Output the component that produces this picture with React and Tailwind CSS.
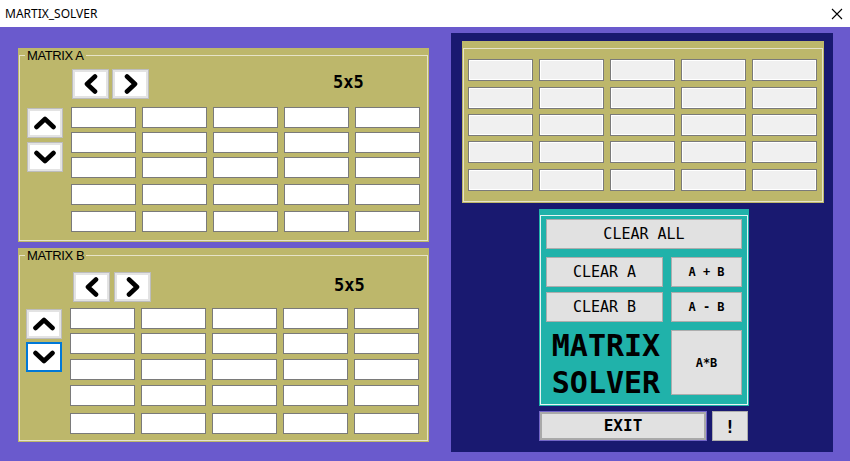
import { useState } from "react";

const mono = { fontFamily: '"DejaVu Sans Mono", "Liberation Mono", monospace' };
const sans = { fontFamily: '"Liberation Sans", Arial, sans-serif' };

const gapCls = {
  0: "",
  4: "mt-[4px]",
  5: "mt-[5px]",
  6: "mt-[6px]",
  7: "mt-[7px]",
};

function Chevron({ dir }) {
  const pts = {
    left: "12,2.5 4,10 12,17.5",
    right: "4,2.5 12,10 4,17.5",
    up: "2.5,11 11,3 19.5,11",
    down: "2.5,3 11,11 19.5,3",
  };
  const horiz = dir === "left" || dir === "right";
  return (
    <svg
      width={horiz ? 16 : 22}
      height={horiz ? 20 : 14}
      viewBox={horiz ? "0 0 16 20" : "0 0 22 14"}
      fill="none"
    >
      <polyline
        points={pts[dir]}
        stroke="#000"
        strokeWidth="4.6"
        strokeLinecap="round"
        strokeLinejoin="round"
      />
    </svg>
  );
}

function NavButton({ dir, focused, className = "" }) {
  const horiz = dir === "left" || dir === "right";
  return (
    <button
      className={`flex items-center justify-center bg-white ${
        horiz ? "w-[37px]" : "w-[36px]"
      } h-[30px] ${
        focused
          ? "border-2 border-[#0078d7]"
          : "border border-[#bdbdbd] shadow-[inset_0_0_0_2px_#e3e3e3]"
      } ${className}`}
    >
      <Chevron dir={dir} />
    </button>
  );
}

function Cells({ gaps, white = true }) {
  return (
    <div className="flex flex-col">
      {gaps.map((g, r) => (
        <div key={r} className={`flex gap-[6px] ${gapCls[g]}`}>
          {[0, 1, 2, 3, 4].map((c) =>
            white ? (
              <input
                key={c}
                className="w-[65px] h-[21px] bg-white border border-[#7a7a7a] outline-none"
              />
            ) : (
              <div
                key={c}
                className="w-[65px] h-[22px] bg-[#f0f0f0] border border-[#7a7a7a] shadow-[inset_0_0_0_1px_#ffffff]"
              />
            )
          )}
        </div>
      ))}
    </div>
  );
}

function MatrixPanel({ legend, b }) {
  return (
    <div
      className={`relative w-[411px] h-[194px] bg-[#bdb76b] ${
        b ? "pt-[24px]" : "pt-[21px]"
      }`}
    >
      <div className="absolute top-[7px] left-[1px] right-[1px] bottom-[1px] border border-[#e6e3c8]" />
      <span
        className="absolute top-[0px] left-[7px] px-[2px] bg-[#bdb76b] text-[13px] leading-[15px] tracking-[-0.4px] text-black"
        style={sans}
      >
        {legend}
      </span>
      <div
        className={`relative flex items-center h-[30px] ${
          b ? "pl-[55px] gap-[4px]" : "pl-[54px] gap-[3px]"
        }`}
      >
        <NavButton dir="left" />
        <NavButton dir="right" />
        <span
          className={`text-[17px] font-bold text-black ${
            b ? "ml-[179px] -mt-[3px]" : "ml-[181px] -mt-[2px]"
          }`}
          style={mono}
        >
          5x5
        </span>
      </div>
      <div
        className={`relative flex ${b ? "mt-[6px] pl-[8px]" : "mt-[8px] pl-[9px]"}`}
      >
        <div className="flex flex-col mt-[1px]">
          <NavButton dir="up" />
          <NavButton
            dir="down"
            focused={b}
            className={b ? "mt-[3px]" : "mt-[4px]"}
          />
        </div>
        <div className="ml-[8px]">
          <Cells gaps={b ? [0, 4, 5, 5, 7] : [0, 4, 4, 6, 6]} />
        </div>
      </div>
    </div>
  );
}

function GrayButton({ children, className = "" }) {
  return (
    <button
      className={`flex items-center justify-center bg-[#e1e1e1] border border-[#adadad] text-black ${className}`}
      style={mono}
    >
      {children}
    </button>
  );
}

export default function App() {
  const [ops] = useState(["A + B", "A - B"]);

  return (
    <div className="w-[850px] h-[461px] flex flex-col overflow-hidden">
      {/* Title bar */}
      <div className="h-[27px] bg-white flex items-center justify-between pl-[5px] pr-[6px]">
        <span
          className="text-[12px] text-black"
          style={{ fontFamily: '"Noto Sans", "Open Sans", sans-serif' }}
        >
          MARTIX_SOLVER
        </span>
        <svg width="12" height="12" viewBox="0 0 12 12" className="mr-[1px]">
          <path d="M1 1 L11 11 M11 1 L1 11" stroke="#000" strokeWidth="1.1" />
        </svg>
      </div>

      {/* Body */}
      <div className="flex-1 bg-[#6a5acd] flex">
        <div className="flex flex-col gap-[6px] pt-[21px] pl-[18px]">
          <MatrixPanel legend="MATRIX A" />
          <MatrixPanel legend="MATRIX B" b />
        </div>

        <div className="ml-[22px] mt-[6px] w-[382px] h-[419px] bg-[#191970] pt-[8px] pl-[11px]">
          {/* Result */}
          <div className="relative w-[362px] h-[162px] bg-[#bdb76b] pt-[18px] pl-[6px]">
            <div className="absolute top-[7px] left-[1px] right-[1px] bottom-[1px] border border-[#e6e3c8]" />
            <div className="relative">
              <Cells gaps={[0, 6, 5, 5, 6]} white={false} />
            </div>
          </div>

          {/* Controls */}
          <div className="ml-[77px] mt-[6px] relative w-[210px] h-[197px] bg-[#20b2aa] pt-[10px] px-[7px]">
            <div className="absolute top-[6px] left-[1px] right-[1px] bottom-[1px] border border-[#e6f5f3]" />
            <div className="relative">
              <GrayButton className="w-[196px] h-[30px] text-[15px]">
                CLEAR ALL
              </GrayButton>
              <div className="flex gap-[8px] mt-[8px]">
                <div className="w-[117px] flex flex-col">
                  <GrayButton className="w-[117px] h-[30px] text-[15px]">
                    CLEAR A
                  </GrayButton>
                  <GrayButton className="w-[117px] h-[30px] text-[15px] mt-[5px]">
                    CLEAR B
                  </GrayButton>
                  <div
                    className="mt-[5px] text-center text-[30px] leading-[37px] font-bold text-black pl-[3px]"
                    style={mono}
                  >
                    MATRIX
                    <br />
                    SOLVER
                  </div>
                </div>
                <div className="w-[71px] flex flex-col">
                  <GrayButton className="w-[71px] h-[30px] text-[12px] font-bold whitespace-pre">
                    {ops[0]}
                  </GrayButton>
                  <GrayButton className="w-[71px] h-[30px] text-[12px] font-bold mt-[5px] whitespace-pre">
                    {ops[1]}
                  </GrayButton>
                  <GrayButton className="w-[71px] h-[65px] text-[12px] font-bold mt-[8px]">
                    A*B
                  </GrayButton>
                </div>
              </div>
            </div>
          </div>

          {/* Exit row */}
          <div className="ml-[77px] mt-[5px] flex gap-[5px]">
            <button
              className="w-[168px] h-[30px] bg-[#e1e1e1] border border-[#7366c9] shadow-[inset_0_0_0_2px_#a9a9a9] text-[16px] font-bold text-black"
              style={mono}
            >
              EXIT
            </button>
            <GrayButton className="w-[36px] h-[30px] text-[18px] font-bold">
              !
            </GrayButton>
          </div>
        </div>
      </div>
    </div>
  );
}
